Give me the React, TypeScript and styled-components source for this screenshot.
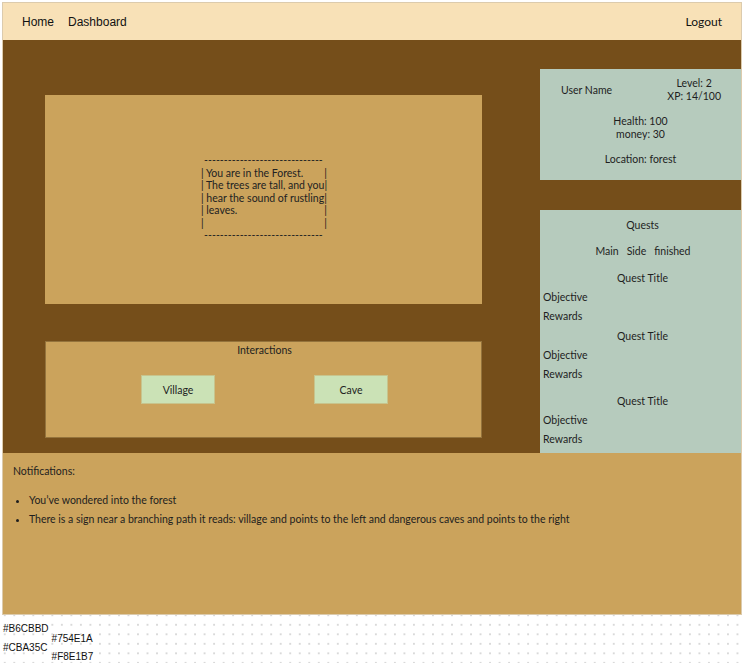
import React from "react";
import styled, { createGlobalStyle } from "styled-components";

const Global = createGlobalStyle`
  *, *::before, *::after { box-sizing: border-box; }
  html, body { margin: 0; padding: 0; }
  body {
    background-color: #ffffff;
    background-image: radial-gradient(circle, #d9d9d9 0.9px, transparent 1.1px);
    background-size: 9.53px 9.53px;
    background-position: 0px 1.5px;
    font-family: Lato, "Liberation Sans", sans-serif;
    color: #1e1e1e;
    min-height: 663px;
  }
`;

const Page = styled.div`
  padding: 2px 2px 0 2px;
`;

const Frame = styled.div`
  width: 740px;
  border: 1px solid #dccbad;
  display: flex;
  flex-direction: column;
`;

const Nav = styled.nav`
  height: 37px;
  background: #f8e1b7;
  display: flex;
  align-items: center;
  gap: 14px;
  padding: 0 19px 0 19px;
  font-size: 12px;
`;

const NavLink = styled.span<{ $font?: string }>`
  font-family: ${(p) => p.$font ?? '"Liberation Sans", Arial, sans-serif'};
  color: #111;
`;

const Spacer = styled.div`
  flex: 1;
`;

const Main = styled.main`
  height: 413px;
  background: #754e1a;
  display: flex;
`;

const LeftCol = styled.div`
  width: 437px;
  margin: 55px 0 0 42px;
  display: flex;
  flex-direction: column;
  gap: 37px;
`;

const StoryBox = styled.section`
  height: 209px;
  background: #cba35c;
  display: flex;
  align-items: center;
  justify-content: center;
  padding-left: 1px;
`;

const Ascii = styled.div`
  width: 126px;
  font-size: 10.5px;
  line-height: 12.4px;
  color: #222;
  padding-bottom: 3px;
`;

const AsciiDash = styled.div`
  padding-left: 3px;
  letter-spacing: 0.06px;
  white-space: nowrap;
  line-height: 13px;
`;

const AsciiLine = styled.div`
  display: flex;
  justify-content: space-between;
  white-space: pre;
`;

const InteractBox = styled.section`
  height: 97px;
  background: #cba35c;
  border: 1px solid #94733c;
  display: flex;
  flex-direction: column;
  align-items: center;
  padding-top: 1px;
  font-size: 10.5px;
`;

const BoxTitle = styled.div`
  line-height: 14px;
  padding-left: 2px;
`;

const ButtonRow = styled.div`
  display: flex;
  gap: 99px;
  margin-top: 18px;
  padding-left: 2px;
`;

const ActionButton = styled.button`
  width: 74px;
  height: 29px;
  background: #cbe2b6;
  border: 1px solid #c7c48d;
  font-family: Lato, "Liberation Sans", sans-serif;
  font-size: 10.5px;
  color: #222;
  padding: 0;
`;

const RightCol = styled.div`
  width: 201px;
  margin-left: auto;
  display: flex;
  flex-direction: column;
`;

const StatsPanel = styled.section`
  height: 111px;
  margin-top: 29px;
  background: #b6cbbd;
  font-size: 10.5px;
  line-height: 13px;
  display: flex;
  flex-direction: column;
  align-items: center;
`;

const StatsTop = styled.div`
  width: 100%;
  display: flex;
  justify-content: space-between;
  align-items: center;
  padding: 8px 20px 0 21px;
`;

const CenterText = styled.div<{ $mt?: number }>`
  text-align: center;
  margin-top: ${(p) => p.$mt ?? 0}px;
`;

const QuestPanel = styled.section`
  flex: 1;
  margin-top: 30px;
  background: #b6cbbd;
  font-size: 10.5px;
  line-height: 13px;
  display: flex;
  flex-direction: column;
  padding: 9px 0 0 3px;
`;

const QuestHeading = styled.div<{ $mt?: number }>`
  text-align: center;
  margin-top: ${(p) => p.$mt ?? 0}px;
  padding-left: 1px;
`;

const Tabs = styled.div`
  display: flex;
  justify-content: center;
  gap: 8px;
  margin-top: 13px;
  padding-left: 2px;
`;

const QuestLine = styled.div`
  margin-top: 6px;
`;

const Notifications = styled.section`
  height: 161px;
  background: #cba35c;
  font-size: 10.5px;
  line-height: 13px;
  padding: 12px 10px 0 10px;
`;

const NoteList = styled.ul`
  margin: 16px 0 0 0;
  padding: 0 0 0 16px;
  display: flex;
  flex-direction: column;
  gap: 6px;
`;

const Swatches = styled.div`
  display: flex;
  gap: 3px;
  padding: 4px 0 0 1px;
  font-family: "Liberation Sans", Arial, sans-serif;
  font-size: 10px;
  line-height: 19px;
  color: #111;
`;

const SwatchCol = styled.div<{ $offset?: number }>`
  display: flex;
  flex-direction: column;
  padding-top: ${(p) => p.$offset ?? 0}px;
  line-height: ${(p) => (p.$offset ? 18 : 19)}px;
`;

const quests = [0, 0, 7];

export default function App() {
  return (
    <>
      <Global />
      <Page>
        <Frame>
          <Nav>
            <NavLink>Home</NavLink>
            <NavLink>Dashboard</NavLink>
            <Spacer />
            <NavLink $font="Lato, sans-serif">Logout</NavLink>
          </Nav>
          <Main>
            <LeftCol>
              <StoryBox>
                <Ascii>
                  <AsciiDash>------------------------------</AsciiDash>
                  <AsciiLine><span>| You are in the Forest.</span><span>|</span></AsciiLine>
                  <AsciiLine><span>| The trees are tall, and you</span><span>|</span></AsciiLine>
                  <AsciiLine><span>| hear the sound of rustling</span><span>|</span></AsciiLine>
                  <AsciiLine><span>| leaves.</span><span>|</span></AsciiLine>
                  <AsciiLine><span>|</span><span>|</span></AsciiLine>
                  <AsciiDash>------------------------------</AsciiDash>
                </Ascii>
              </StoryBox>
              <InteractBox>
                <BoxTitle>Interactions</BoxTitle>
                <ButtonRow>
                  <ActionButton>Village</ActionButton>
                  <ActionButton>Cave</ActionButton>
                </ButtonRow>
              </InteractBox>
            </LeftCol>
            <RightCol>
              <StatsPanel>
                <StatsTop>
                  <span>User Name</span>
                  <CenterText>
                    Level: 2
                    <br />
                    XP: 14/100
                  </CenterText>
                </StatsTop>
                <CenterText $mt={12}>
                  Health: 100
                  <br />
                  money: 30
                </CenterText>
                <CenterText $mt={12}>Location: forest</CenterText>
              </StatsPanel>
              <QuestPanel>
                <QuestHeading>Quests</QuestHeading>
                <Tabs>
                  <span>Main</span>
                  <span>Side</span>
                  <span>finished</span>
                </Tabs>
                {quests.map((extra, i) => (
                  <React.Fragment key={i}>
                    <QuestHeading $mt={i === 0 ? 14 : 7 + extra}>Quest Title</QuestHeading>
                    <QuestLine>Objective</QuestLine>
                    <QuestLine>Rewards</QuestLine>
                  </React.Fragment>
                ))}
              </QuestPanel>
            </RightCol>
          </Main>
          <Notifications>
            <div>Notifications:</div>
            <NoteList>
              <li>You’ve wondered into the forest</li>
              <li>
                There is a sign near a branching path it reads: village and points to the left and
                dangerous caves and points to the right
              </li>
            </NoteList>
          </Notifications>
        </Frame>
        <Swatches>
          <SwatchCol>
            <span>#B6CBBD</span>
            <span>#CBA35C</span>
          </SwatchCol>
          <SwatchCol $offset={11}>
            <span>#754E1A</span>
            <span>#F8E1B7</span>
          </SwatchCol>
        </Swatches>
      </Page>
    </>
  );
}
